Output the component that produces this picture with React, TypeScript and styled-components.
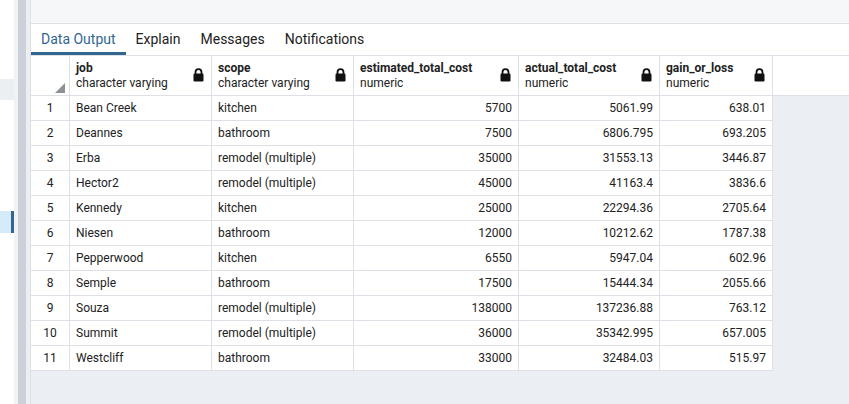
import React from 'react';
import styled, { createGlobalStyle } from 'styled-components';

const GlobalStyle = createGlobalStyle`
  html, body {
    margin: 0;
    padding: 0;
    height: 100%;
  }
  body {
    font-family: Roboto, "Liberation Sans", sans-serif;
    color: #222222;
    background: #ffffff;
  }
`;

const Page = styled.div`
  display: flex;
  height: 404px;
  overflow: hidden;
`;

const SideNav = styled.div`
  width: 14px;
  background: #ffffff;
  display: flex;
  flex-direction: column;
`;

const NavItem = styled.div<{ top: number; height: number; selected?: boolean }>`
  margin-top: ${p => p.top}px;
  height: ${p => p.height}px;
  background: ${p => (p.selected ? '#d6ebf9' : '#ebeef3')};
  border-right: ${p => (p.selected ? '3px solid #326690' : 'none')};
`;

const Splitter = styled.div`
  width: 8px;
  background: #ccd0d8;
  border-left: 4px solid #f1f2f4;
  border-right: 4px solid #eceef2;
`;

const Main = styled.div`
  flex: 1;
  display: flex;
  flex-direction: column;
  border-left: 1px solid #dde0e6;
  min-width: 0;
`;

const TopBar = styled.div`
  height: 23px;
  background: #f6f7f9;
  border-bottom: 1px solid #dde0e6;
`;

const TabBar = styled.div`
  height: 31px;
  display: flex;
  border-bottom: 1px solid #dde0e6;
  background: #ffffff;
`;

const Tab = styled.div<{ active?: boolean }>`
  padding: 2px 10px 0;
  display: flex;
  align-items: center;
  font-size: 14px;
  color: ${p => (p.active ? '#326690' : '#222222')};
  border-bottom: 3px solid ${p => (p.active ? '#326690' : 'transparent')};
`;

const GridArea = styled.div`
  flex: 1;
  background: #ebeef3;
`;

const HeaderRow = styled.div`
  display: flex;
  height: 39px;
  background: #ffffff;
  border-bottom: 1px solid #dde0e6;
`;

const DataRow = styled.div`
  display: flex;
  height: 25px;
`;

const CornerCell = styled.div`
  width: 38px;
  border-right: 1px solid #dde0e6;
  position: relative;
`;

const CornerMark = styled.div`
  position: absolute;
  right: 4px;
  bottom: 2px;
  width: 0;
  height: 0;
  border-left: 10px solid transparent;
  border-bottom: 10px solid #8e9196;
`;

const HeadCell = styled.div<{ w: number }>`
  width: ${p => p.w}px;
  box-sizing: border-box;
  border-right: 1px solid #dde0e6;
  padding: 5px 6px 0 6px;
  display: flex;
  align-items: flex-start;
  justify-content: space-between;
`;

const HeadText = styled.div`
  display: flex;
  flex-direction: column;
  line-height: 15px;
`;

const ColName = styled.span`
  font-size: 12px;
  font-weight: 700;
  color: #222222;
`;

const ColType = styled.span`
  font-size: 12px;
  color: #222222;
`;

const LockIcon = styled.svg`
  margin-top: 7px;
  margin-right: 1px;
  flex-shrink: 0;
`;

const Cell = styled.div<{ w: number; align?: 'left' | 'right' | 'center' }>`
  width: ${p => p.w}px;
  box-sizing: border-box;
  background: #ffffff;
  border-right: 1px solid #dde0e6;
  border-bottom: 1px solid #dde0e6;
  height: 25px;
  line-height: 24px;
  font-size: 12px;
  padding: 0 6px;
  text-align: ${p => p.align || 'left'};
  white-space: nowrap;
  overflow: hidden;
`;

const Lock = () => (
  <LockIcon width="11" height="14" viewBox="0 0 11 14">
    <path d="M2.5 6V4.2a3 3 0 0 1 6 0V6" fill="none" stroke="#111" strokeWidth="1.8" />
    <rect x="0.5" y="5.5" width="10" height="8" rx="1.2" fill="#111" />
  </LockIcon>
);

const columns = [
  { name: 'job', type: 'character varying', w: 142, align: 'left' as const },
  { name: 'scope', type: 'character varying', w: 142, align: 'left' as const },
  { name: 'estimated_total_cost', type: 'numeric', w: 165, align: 'right' as const },
  { name: 'actual_total_cost', type: 'numeric', w: 141, align: 'right' as const },
  { name: 'gain_or_loss', type: 'numeric', w: 113, align: 'right' as const },
];

const rows = [
  ['Bean Creek', 'kitchen', '5700', '5061.99', '638.01'],
  ['Deannes', 'bathroom', '7500', '6806.795', '693.205'],
  ['Erba', 'remodel (multiple)', '35000', '31553.13', '3446.87'],
  ['Hector2', 'remodel (multiple)', '45000', '41163.4', '3836.6'],
  ['Kennedy', 'kitchen', '25000', '22294.36', '2705.64'],
  ['Niesen', 'bathroom', '12000', '10212.62', '1787.38'],
  ['Pepperwood', 'kitchen', '6550', '5947.04', '602.96'],
  ['Semple', 'bathroom', '17500', '15444.34', '2055.66'],
  ['Souza', 'remodel (multiple)', '138000', '137236.88', '763.12'],
  ['Summit', 'remodel (multiple)', '36000', '35342.995', '657.005'],
  ['Westcliff', 'bathroom', '33000', '32484.03', '515.97'],
];

const App: React.FC = () => {
  return (
    <>
      <GlobalStyle />
      <Page>
        <SideNav>
          <NavItem top={79} height={21} />
          <NavItem top={111} height={22} selected />
        </SideNav>
        <Splitter />
        <Main>
          <TopBar />
          <TabBar>
            <Tab active>Data Output</Tab>
            <Tab>Explain</Tab>
            <Tab>Messages</Tab>
            <Tab>Notifications</Tab>
          </TabBar>
          <GridArea>
            <HeaderRow>
              <CornerCell>
                <CornerMark />
              </CornerCell>
              {columns.map(col => (
                <HeadCell key={col.name} w={col.w}>
                  <HeadText>
                    <ColName>{col.name}</ColName>
                    <ColType>{col.type}</ColType>
                  </HeadText>
                  <Lock />
                </HeadCell>
              ))}
            </HeaderRow>
            {rows.map((row, i) => (
              <DataRow key={i}>
                <Cell w={39} align="center">{i + 1}</Cell>
                {row.map((val, j) => (
                  <Cell key={j} w={columns[j].w} align={columns[j].align}>
                    {val}
                  </Cell>
                ))}
              </DataRow>
            ))}
          </GridArea>
        </Main>
      </Page>
    </>
  );
};

export default App;
